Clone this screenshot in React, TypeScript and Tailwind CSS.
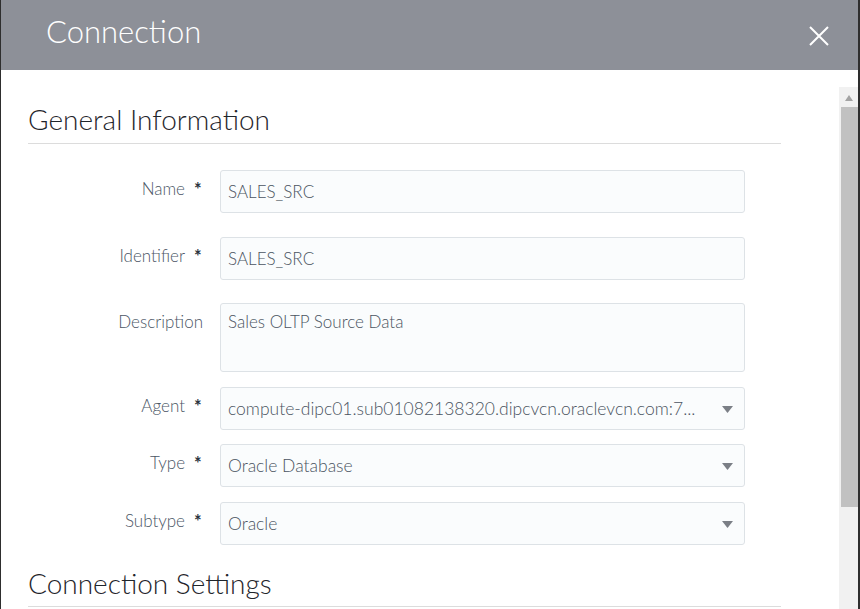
const font = { fontFamily: "Lato, 'Noto Sans', sans-serif" };

function Field({
  label,
  required,
  children,
  className = "",
}: {
  label: string;
  required?: boolean;
  children: React.ReactNode;
  className?: string;
}) {
  return (
    <div className={`flex items-start ${className}`}>
      <div
        className={`w-[192px] flex justify-end pt-[8px] text-[17px] leading-[22px] text-[#4b5665] font-light ${required ? "" : "pr-[17px]"}`}
      >
        <span>{label}</span>
        {required && (
          <span className="ml-[9px] w-[26px] text-left text-[18px] text-[#2b3340] font-bold">*</span>
        )}
      </div>
      <div>{children}</div>
    </div>
  );
}

function TextBox({ value, tall }: { value: string; tall?: boolean }) {
  return (
    <div
      className={`w-[525px] ${tall ? "h-[69px] pt-[7px]" : "h-[43px] pt-[10px]"} bg-[#fafcfd] border border-[#dde2e6] rounded-[3px] px-[7px] text-[17px] leading-[22px] text-[#4a5461] font-light`}
    >
      {value}
    </div>
  );
}

function Select({ value }: { value: string }) {
  return (
    <div className="w-[525px] h-[43px] bg-[#fafcfd] border border-[#dde2e6] rounded-[3px] pl-[7px] pr-[11px] flex items-center text-[17.5px] text-[#4a5461] font-light">
      <span className="flex-1 truncate pt-[1px]">{value}</span>
      <svg width="11" height="7" viewBox="0 0 11 7" className="ml-[14px] mt-[1px] shrink-0">
        <path d="M0 0 H11 L5.5 7 Z" fill="#7b7f86" />
      </svg>
    </div>
  );
}

export default function App() {
  return (
    <div style={font} className="w-[860px] h-[609px] overflow-hidden bg-white border-l border-r-2 border-[#2e2e2e] flex flex-col">
      <div className="h-[70px] shrink-0 bg-[#8d9098] flex items-center justify-between pl-[45px] pr-[28px]">
        <h1 className="text-[31px] font-light text-white leading-none -mt-[7px]">Connection</h1>
        <svg width="22" height="22" viewBox="0 0 22 22" className="mt-[2px]">
          <path d="M2 2 L20 20 M20 2 L2 20" stroke="white" strokeWidth="2" />
        </svg>
      </div>
      <div className="flex flex-1 min-h-0">
        <div className="flex-1 pl-[27px] pt-[32px]">
          <div className="w-[753px] border-b border-[#dcdcdc] pb-[7px]">
            <h2 className="text-[28px] leading-[34px] font-light text-[#1f252b]">General Information</h2>
          </div>
          <div className="mt-[26px]">
            <Field label="Name" required>
              <TextBox value="SALES_SRC" />
            </Field>
            <Field label="Identifier" required className="mt-[24px]">
              <TextBox value="SALES_SRC" />
            </Field>
            <Field label="Description" className="mt-[23px]">
              <TextBox value="Sales OLTP Source Data" tall />
            </Field>
            <Field label="Agent" required className="mt-[15px]">
              <Select value="compute-dipc01.sub01082138320.dipcvcn.oraclevcn.com:7..." />
            </Field>
            <Field label="Type" required className="mt-[14px]">
              <Select value="Oracle Database" />
            </Field>
            <Field label="Subtype" required className="mt-[15px]">
              <Select value="Oracle" />
            </Field>
          </div>
          <div className="mt-[21px] w-[753px] border-b border-[#dcdcdc] pb-[6px]">
            <h2 className="text-[28px] leading-[34px] font-light text-[#1f252b]">Connection Settings</h2>
          </div>
        </div>
        <div className="w-[19px] mt-[17px] bg-[#f1f1f1] flex flex-col items-center">
          <svg width="8" height="6" viewBox="0 0 8 6" className="mt-[8px]">
            <path d="M0 6 L4 0 L8 6 Z" fill="#a3a3a3" />
          </svg>
          <div className="mt-[6px] w-[17px] h-[400px] bg-[#c1c1c1] self-end" />
        </div>
      </div>
    </div>
  );
}
